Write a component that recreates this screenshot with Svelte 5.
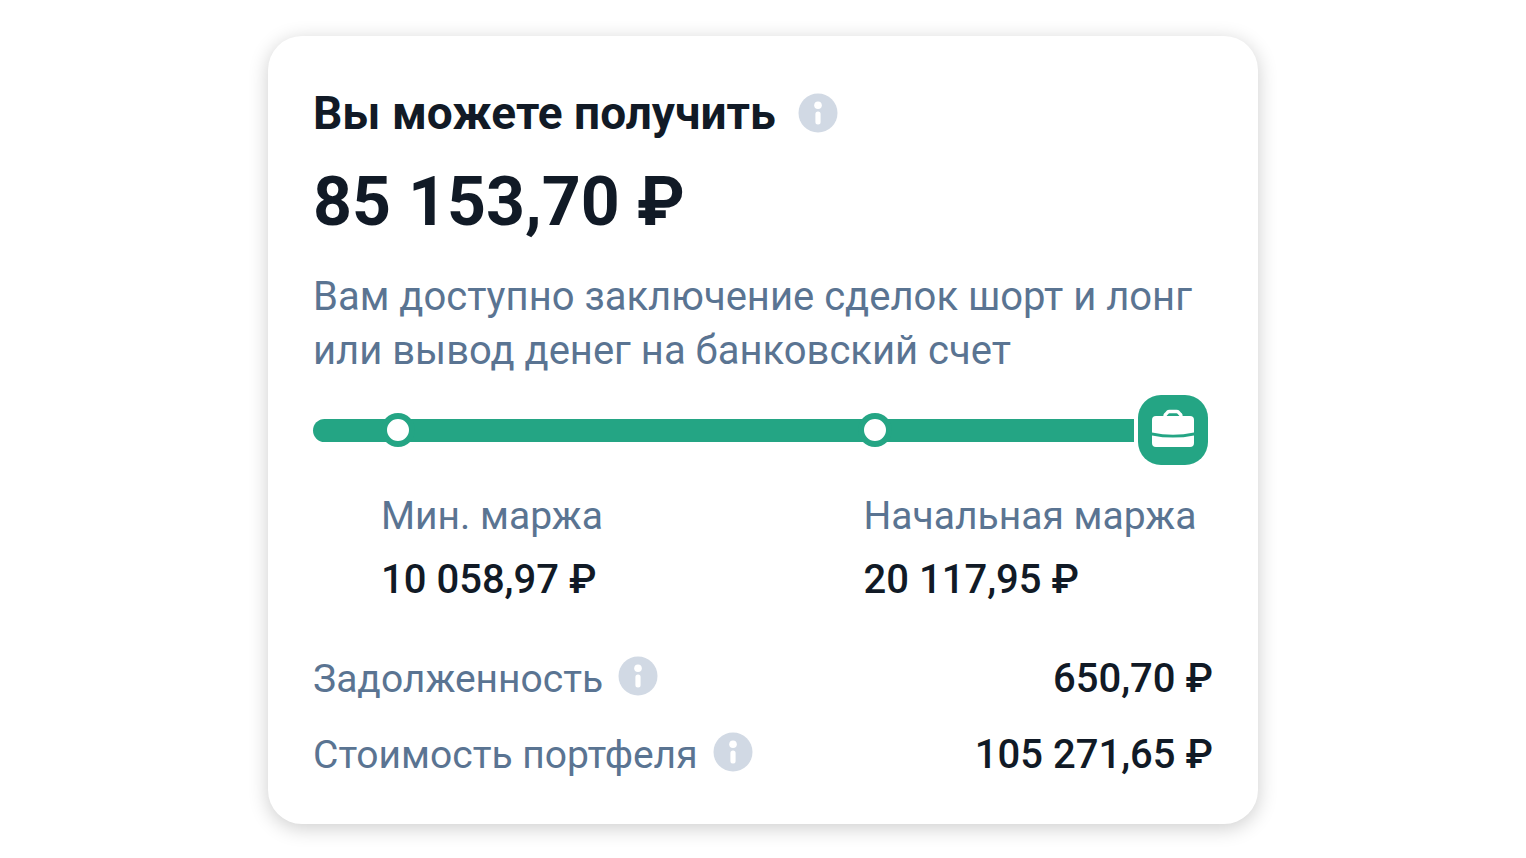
<!--
  Margin summary card: the sum available to the client, a scale with the
  minimum and initial margin levels, and the debt and portfolio totals.
-->
<script lang="ts">
  interface Level {
    label: string;
    value: string;
    /** Place on the scale, percent of its length. */
    position: number;
  }

  const levels: Level[] = [
    { label: "Мин. маржа", value: "10 058,97 ₽", position: 10.4 },
    { label: "Начальная маржа", value: "20 117,95 ₽", position: 68.5 }
  ];

  const totals = [
    { label: "Задолженность", value: "650,70 ₽" },
    { label: "Стоимость портфеля", value: "105 271,65 ₽" }
  ];
</script>

{#snippet info(label: string)}
  <button class="info" type="button" aria-label={label}>
    <svg viewBox="0 0 40 40" aria-hidden="true">
      <circle cx="20" cy="20" r="19.5" fill="#d1d9e4" />
      <circle cx="20" cy="12.2" r="3.8" fill="#fff" />
      <rect x="17.4" y="18.5" width="5.2" height="13" rx="2.5" fill="#fff" />
    </svg>
  </button>
{/snippet}

<main class="card">
  <header class="heading">
    <h1>Вы можете получить</h1>
    {@render info("Вы можете получить")}
  </header>
  <p class="amount">85 153,70 ₽</p>
  <p class="hint">Вам доступно заключение сделок шорт и лонг или вывод денег на банковский счет</p>

  <div class="scale">
    <div class="track">
      {#each levels as level}
        <span class="marker" style="left: {level.position}%"></span>
      {/each}
    </div>
    <svg class="portfolio" viewBox="0 0 70 70" aria-hidden="true">
      <rect width="70" height="70" rx="23" fill="#24a584" />
      <path
        d="M27 22v-1q0-1 .7-1.700l1.800-2q.8-.8 2-.8h7q1.200 0 2 .8l1.800 2q.7.700.7 1.700v1"
        fill="none"
        stroke="#fff"
        stroke-width="3.4"
      />
      <path
        d="M18 21h34q4 0 4 4v12.600q-21 4.400-42 0V25q0-4 4-4z"
        fill="#fff"
      />
      <path
        d="M14 40.400q21 4.400 42 0V48q0 4-4 4H18q-4 0-4-4z"
        fill="#fff"
      />
    </svg>
  </div>

  <dl class="levels">
    {#each levels as level}
      <div>
        <dt>{level.label}</dt>
        <dd>{level.value}</dd>
      </div>
    {/each}
  </dl>

  <dl class="totals">
    {#each totals as total}
      <div class="total">
        <dt>{total.label} {@render info(total.label)}</dt>
        <dd>{total.value}</dd>
      </div>
    {/each}
  </dl>
</main>

<style>
  :global(body) {
    margin: 0;
    background: #fff;
  }

  .card {
    box-sizing: border-box;
    max-width: 990px;
    margin: 36px auto;
    padding: 48px 45px 42px;
    border-radius: 34px;
    background: #fff;
    box-shadow: 0 4px 20px rgb(0 0 0 / 20%);
    color: #111a26;
    font-family: Roboto, "Liberation Sans", sans-serif;
    font-size: 40px;
    line-height: 54px;
  }

  h1,
  p,
  dl,
  dd {
    margin: 0;
  }

  .heading {
    display: flex;
    align-items: center;
    gap: 22px;
  }
  h1 {
    font-size: 46px;
    font-weight: 700;
    line-height: 58px;
  }

  .info {
    flex: none;
    width: 40px;
    height: 40px;
    padding: 0;
    border: 0;
    border-radius: 50%;
    background: none;
    cursor: pointer;
  }
  .info svg {
    display: block;
  }
  .info:focus-visible {
    outline: 2px solid #24a584;
    outline-offset: 2px;
  }

  .amount {
    font-size: 68px;
    font-weight: 700;
    line-height: 120px;
  }

  .hint,
  dt {
    color: #5a7492;
  }
  .hint {
    margin-top: 8px;
  }

  .scale {
    display: flex;
    align-items: center;
    gap: 4px;
    margin: 17px 5px 24px 0;
  }
  .track {
    position: relative;
    flex: 1;
    height: 23px;
    border-radius: 12px 0 0 12px;
    background: #24a584;
  }
  .marker {
    position: absolute;
    top: 50%;
    box-sizing: border-box;
    width: 34px;
    height: 34px;
    border: 6px solid #24a584;
    border-radius: 50%;
    background: #fff;
    transform: translate(-50%, -50%);
  }
  .portfolio {
    flex: none;
    width: 70px;
    height: 70px;
  }

  .levels {
    display: grid;
    grid-template-columns: 58fr 42fr;
    padding-left: 68px;
  }
  dt {
    font-size: 39px;
  }
  dd {
    font-weight: 500;
  }
  .levels dd {
    margin-top: 10px;
  }

  .totals {
    display: grid;
    gap: 22px;
    margin-top: 45px;
  }
  .total {
    display: flex;
    justify-content: space-between;
  }
  .total dt {
    display: flex;
    align-items: center;
    gap: 15px;
  }
  .total .info {
    margin-bottom: 6px;
  }
</style>
